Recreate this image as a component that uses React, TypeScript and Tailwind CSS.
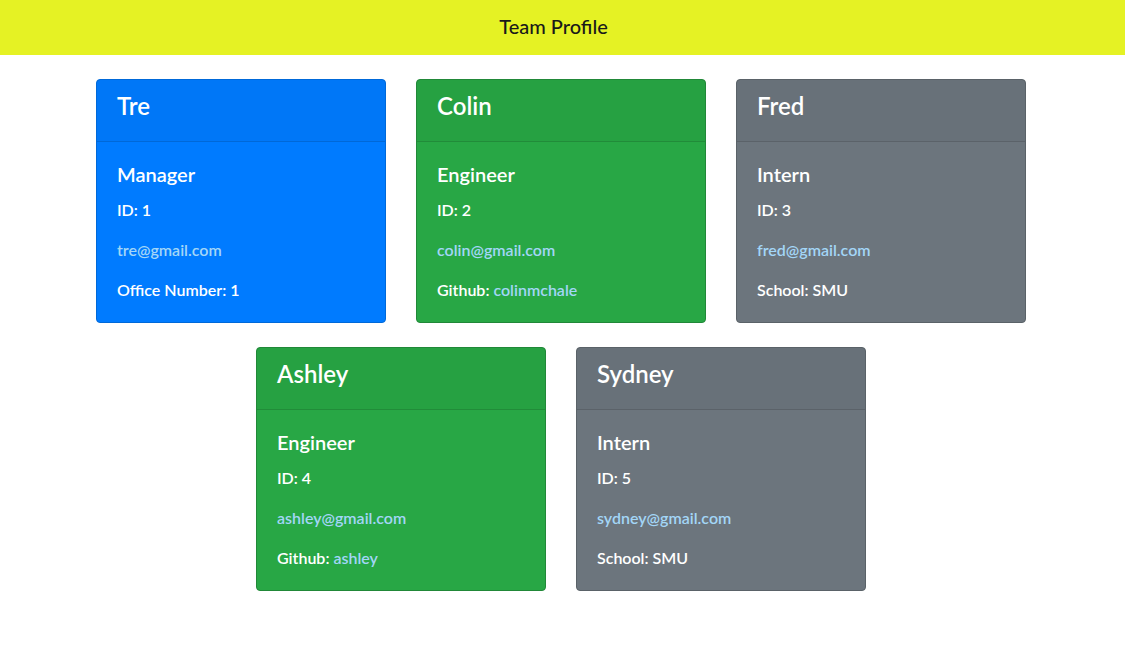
const team = [
  { name: "Tre", role: "Manager", id: 1, email: "tre@gmail.com", extra: "office", value: "1", color: "bg-[#007bff] border-[#0069d9]" },
  { name: "Colin", role: "Engineer", id: 2, email: "colin@gmail.com", extra: "github", value: "colinmchale", color: "bg-[#28a745] border-[#218838]" },
  { name: "Fred", role: "Intern", id: 3, email: "fred@gmail.com", extra: "school", value: "SMU", color: "bg-[#6c757d] border-[#5a6268]" },
  { name: "Ashley", role: "Engineer", id: 4, email: "ashley@gmail.com", extra: "github", value: "ashley", color: "bg-[#28a745] border-[#218838]" },
  { name: "Sydney", role: "Intern", id: 5, email: "sydney@gmail.com", extra: "school", value: "SMU", color: "bg-[#6c757d] border-[#5a6268]" },
];

function Card({ m }: { m: (typeof team)[number] }) {
  return (
    <div className={`w-[290px] rounded border text-white ${m.color}`}>
      {/* header */}
      <div className="bg-black/[0.03] border-b border-black/[0.125] px-5 pt-3 pb-3">
        <h3 className="text-[24px] leading-[1.2] font-semibold mb-2">{m.name}</h3>
      </div>
      {/* body */}
      <div className="p-5 text-[16px] leading-6 font-semibold">
        <h5 className="text-[20px] leading-[1.2] font-semibold mb-3">{m.role}</h5>
        <p className="mb-4">ID: {m.id}</p>
        <p className="mb-4 text-[#a3d6f7]">{m.email}</p>
        {m.extra === "office" && <p>Office Number: {m.value}</p>}
        {m.extra === "github" && (
          <p>
            Github: <span className="text-[#a3d6f7]">{m.value}</span>
          </p>
        )}
        {m.extra === "school" && <p>School: {m.value}</p>}
      </div>
    </div>
  );
}

export default function App() {
  return (
    <div className="min-h-screen bg-white font-['Lato','Liberation_Sans',sans-serif]">
      <header className="h-[55px] bg-[#e5f224] flex items-center justify-center pr-[18px] pb-1">
        <h1 className="text-[20px] font-medium text-[#1a1a1a]">Team Profile</h1>
      </header>
      <main className="w-[930px] ml-[96px] pt-6 flex flex-wrap justify-center gap-x-[30px] gap-y-6">
        {team.map((m) => (
          <Card key={m.id} m={m} />
        ))}
      </main>
    </div>
  );
}
